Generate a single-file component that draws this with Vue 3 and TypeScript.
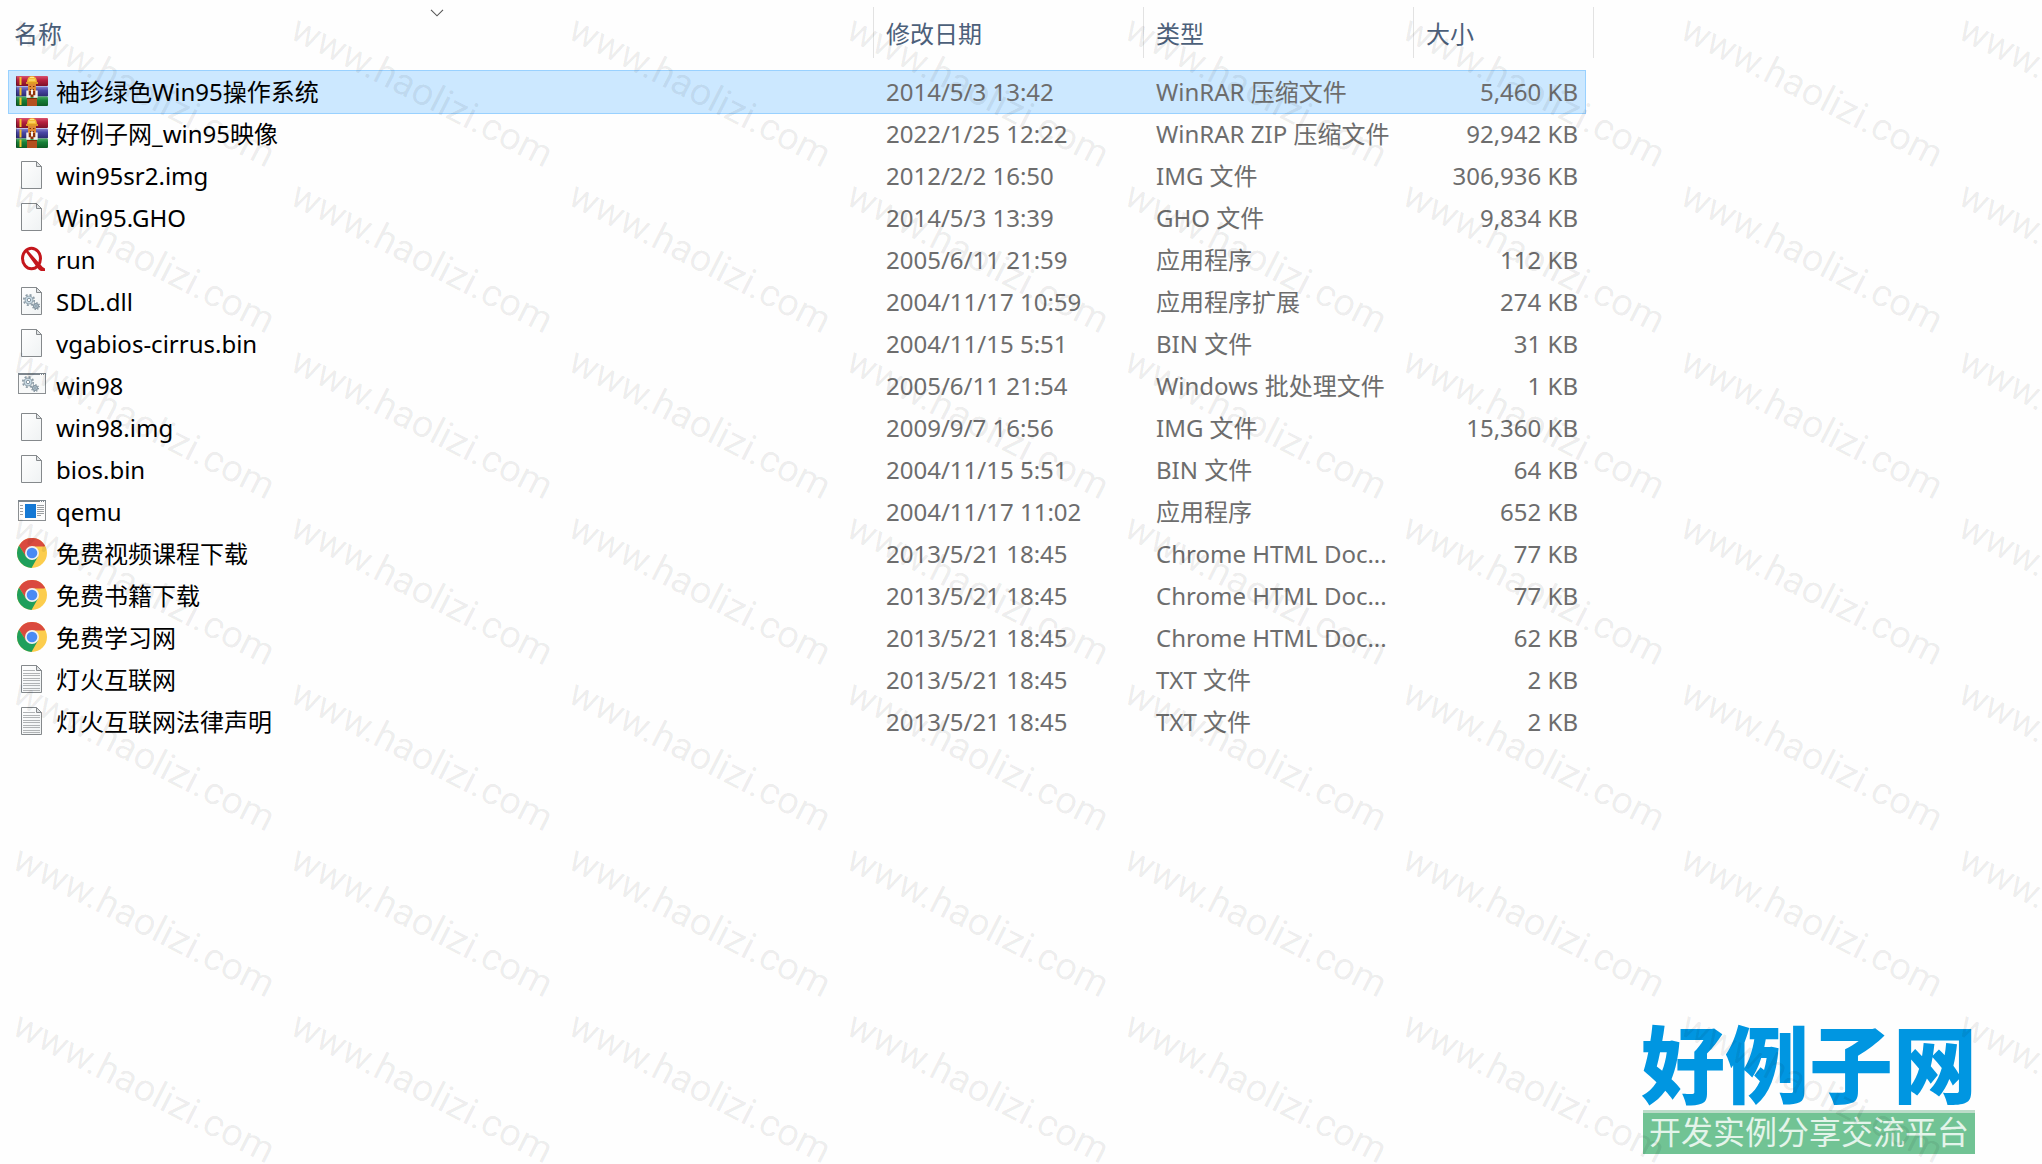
<script setup lang="ts">
import { ref } from 'vue'

type IconKind = 'rar' | 'file' | 'run' | 'dll' | 'bat' | 'exe' | 'chrome' | 'txt'

interface FileEntry {
  icon: IconKind
  name: string
  modified: string
  type: string
  size: string
}

const files: FileEntry[] = [
  { icon: 'rar', name: '袖珍绿色Win95操作系统', modified: '2014/5/3 13:42', type: 'WinRAR 压缩文件', size: '5,460 KB' },
  { icon: 'rar', name: '好例子网_win95映像', modified: '2022/1/25 12:22', type: 'WinRAR ZIP 压缩文件', size: '92,942 KB' },
  { icon: 'file', name: 'win95sr2.img', modified: '2012/2/2 16:50', type: 'IMG 文件', size: '306,936 KB' },
  { icon: 'file', name: 'Win95.GHO', modified: '2014/5/3 13:39', type: 'GHO 文件', size: '9,834 KB' },
  { icon: 'run', name: 'run', modified: '2005/6/11 21:59', type: '应用程序', size: '112 KB' },
  { icon: 'dll', name: 'SDL.dll', modified: '2004/11/17 10:59', type: '应用程序扩展', size: '274 KB' },
  { icon: 'file', name: 'vgabios-cirrus.bin', modified: '2004/11/15 5:51', type: 'BIN 文件', size: '31 KB' },
  { icon: 'bat', name: 'win98', modified: '2005/6/11 21:54', type: 'Windows 批处理文件', size: '1 KB' },
  { icon: 'file', name: 'win98.img', modified: '2009/9/7 16:56', type: 'IMG 文件', size: '15,360 KB' },
  { icon: 'file', name: 'bios.bin', modified: '2004/11/15 5:51', type: 'BIN 文件', size: '64 KB' },
  { icon: 'exe', name: 'qemu', modified: '2004/11/17 11:02', type: '应用程序', size: '652 KB' },
  { icon: 'chrome', name: '免费视频课程下载', modified: '2013/5/21 18:45', type: 'Chrome HTML Doc...', size: '77 KB' },
  { icon: 'chrome', name: '免费书籍下载', modified: '2013/5/21 18:45', type: 'Chrome HTML Doc...', size: '77 KB' },
  { icon: 'chrome', name: '免费学习网', modified: '2013/5/21 18:45', type: 'Chrome HTML Doc...', size: '62 KB' },
  { icon: 'txt', name: '灯火互联网', modified: '2013/5/21 18:45', type: 'TXT 文件', size: '2 KB' },
  { icon: 'txt', name: '灯火互联网法律声明', modified: '2013/5/21 18:45', type: 'TXT 文件', size: '2 KB' },
]

const selected = ref(0)

// Enough watermark tiles to cover the window
const tileColumns = Math.ceil(window.innerWidth / 278)
const tileCount = tileColumns * Math.ceil(window.innerHeight / 166)
</script>

<template>
  <div class="page">
    <svg class="defs" width="0" height="0" aria-hidden="true">
      <defs>
        <linearGradient id="rar-red" x1="0" y1="0" x2="0" y2="1">
          <stop offset="0" stop-color="#d8536f" /><stop offset=".4" stop-color="#b8203f" /><stop offset="1" stop-color="#7d1028" />
        </linearGradient>
        <linearGradient id="rar-blue" x1="0" y1="0" x2="0" y2="1">
          <stop offset="0" stop-color="#8583cf" /><stop offset=".4" stop-color="#4a47a5" /><stop offset="1" stop-color="#2b2a70" />
        </linearGradient>
        <linearGradient id="rar-green" x1="0" y1="0" x2="0" y2="1">
          <stop offset="0" stop-color="#4fae63" /><stop offset=".4" stop-color="#178038" /><stop offset="1" stop-color="#0e5c25" />
        </linearGradient>
        <linearGradient id="paper" x1="0" y1="0" x2="1" y2="1">
          <stop offset="0" stop-color="#ffffff" /><stop offset="1" stop-color="#eff2f3" />
        </linearGradient>
        <g id="gears" fill="none">
          <circle cx="8" cy="8" r="5.200" stroke="#8e9da7" stroke-width="1.800" stroke-dasharray="2.040 2.040" />
          <circle cx="8" cy="8" r="4" fill="#c9dae4" stroke="#98a8b2" />
          <circle cx="8" cy="8" r="1.700" fill="#fff" stroke="#8797a2" />
          <circle cx="15" cy="14" r="3.400" stroke="#83939e" stroke-width="1.200" stroke-dasharray="1.330 1.330" />
          <circle cx="15" cy="14" r="2.400" fill="#b9ccd7" stroke="#83939e" stroke-width="1.200" />
          <circle cx="15" cy="14" r=".8" fill="#6d7f8b" />
        </g>
        <g id="sheet">
          <path d="M5.500 1.500h15l5 5v22h-20z" fill="url(#paper)" stroke="#85898c" />
          <path d="M20.500 1.500v5h5z" fill="#dfe2e4" stroke="#85898c" />
        </g>
      </defs>
    </svg>

    <table class="details">
      <colgroup>
        <col />
        <col class="col-date" />
        <col class="col-type" />
        <col class="col-size" />
      </colgroup>
      <thead>
        <tr>
          <th scope="col" aria-sort="ascending">
            <button type="button" class="head head-name">名称</button>
            <span class="sort">
              <svg width="14" height="8" viewBox="0 0 14 8" aria-hidden="true">
                <path d="M1 .8l6 6 6-6" fill="none" stroke="#555" stroke-width="1.1" />
              </svg>
            </span>
          </th>
          <th scope="col"><button type="button" class="head">修改日期</button></th>
          <th scope="col"><button type="button" class="head">类型</button></th>
          <th scope="col"><button type="button" class="head">大小</button></th>
        </tr>
      </thead>
      <tbody>
        <tr
          v-for="(file, i) in files"
          :key="file.name"
          :class="{ selected: i === selected }"
          @click="selected = i"
        >
          <td>
            <div class="name">
              <svg class="icon" viewBox="0 0 32 32" aria-hidden="true">
                <template v-if="file.icon === 'rar'">
                  <rect x="0" y="0" width="32" height="10" rx="1" fill="url(#rar-red)" />
                  <rect x="0" y="10.500" width="32" height="10" rx="1" fill="url(#rar-blue)" />
                  <rect x="0" y="20.500" width="32" height="9.500" rx="1" fill="url(#rar-green)" />
                  <path d="M.5 0v30" stroke="#000" stroke-opacity=".25" />
                  <path d="M4.500 1v8M4.500 11.500v8M4.500 21.500v7.500" stroke="#f3c22b" stroke-width="2" />
                  <path d="M11 7q0-7 5-7t5 7z" fill="#f4bd35" />
                  <path d="M14 1.500h4M13 4h6" stroke="#ffe68a" />
                  <rect x="10" y="6" width="12" height="2" fill="#e09a26" />
                  <rect x="12" y="8" width="8" height="8" fill="#e08a35" />
                  <path d="M13.500 10.500h1.500m2 0h1.500M14 13.500h4" stroke="#7b3208" />
                  <rect x="12" y="15" width="8" height="6" fill="#8f3209" />
                  <path d="M11.500 14.500v6h3M20.500 14.500v6h-3" fill="none" stroke="#f5f2ef" stroke-width="2.400" />
                  <path d="M16 13.500v5" stroke="#f5f2ef" stroke-width="2" />
                  <path d="M11 22h10v8H11z" fill="#b4501f" />
                  <path d="M11 22.500h10" stroke="#7b2c08" />
                </template>
                <use v-else-if="file.icon === 'file'" href="#sheet" />
                <template v-else-if="file.icon === 'run'">
                  <ellipse cx="15.500" cy="14.500" rx="9" ry="10.300" fill="none" stroke="#c4161c" stroke-width="3" />
                  <path d="M9.500 7.500L11.500 6l13 14.500q2 3 4.500 4v2.500h-4q-2-.5-4-3.500z" fill="#c4161c" />
                </template>
                <template v-else-if="file.icon === 'dll'">
                  <use href="#sheet" />
                  <use href="#gears" x="5" y="6" />
                </template>
                <template v-else-if="file.icon === 'bat'">
                  <rect x="2.500" y="3.500" width="27" height="20" fill="#f8f9f9" stroke="#8b8f92" />
                  <path d="M2 4h28" stroke="#7d868d" stroke-width="2" />
                  <path d="M24 4.500h1m1 0h1m1 0h1" stroke="#fff" />
                  <use href="#gears" x="4" y="4" />
                </template>
                <template v-else-if="file.icon === 'exe'">
                  <rect x="2.500" y="4.500" width="27" height="20" fill="#fcfcfc" stroke="#8b8f92" />
                  <path d="M2 5h28" stroke="#7d868d" stroke-width="2" />
                  <path d="M24 5.500h1m1 0h1m1 0h1" stroke="#fff" />
                  <rect x="9" y="8" width="11" height="14" fill="#1478d4" />
                  <path d="M4 9.500h3M4 12.500h3M4 15.500h3M4 18.500h3M21 9.500h7M21 11.500h7M21 13.500h7M21 15.500h7M21 17.500h7M21 19.500h4" stroke="#9a9ea1" />
                </template>
                <template v-else-if="file.icon === 'chrome'">
                  <circle cx="16" cy="15" r="15" fill="#fccd4d" />
                  <path d="M3 7.500A15 15 0 0 1 29 7.500L28.500 8.500H16L9.800 18.500z" fill="#da4a3f" />
                  <path d="M3 7.500A15 15 0 0 0 15.500 30L22 18.500 16 15 10 18.500z" fill="#1f9f5b" />
                  <circle cx="16" cy="15" r="7" fill="#f1f1f1" />
                  <circle cx="16" cy="15" r="5.300" fill="#4a8af4" />
                </template>
                <template v-else>
                  <use href="#sheet" />
                  <path d="M7 6.500h12M7 9.500h17M7 11.500h17M7 14.500h17M7 16.500h17M7 19.500h17M7 21.500h17M7 24.500h17M7 26.500h17" stroke="#b0b3b5" />
                </template>
              </svg>
              <span>{{ file.name }}</span>
            </div>
          </td>
          <td>{{ file.modified }}</td>
          <td>{{ file.type }}</td>
          <td class="size">{{ file.size }}</td>
        </tr>
      </tbody>
    </table>

    <div class="brand">
      <div class="brand-name">好例子网</div>
      <div class="brand-tag">开发实例分享交流平台</div>
    </div>

    <div class="watermark" aria-hidden="true" :style="{ '--columns': tileColumns }">
      <div v-for="n in tileCount" :key="n" class="tile"><span>www.haolizi.com</span></div>
    </div>
  </div>
</template>

<style>
body {
  background: #fefefe;
}
</style>

<style scoped>
.page {
  position: relative;
  box-sizing: border-box;
  min-height: 100vh;
  padding: 0 0 10px 9px;
  display: flex;
  flex-direction: column;
  overflow: hidden;
  font-family: "Noto Sans", "Noto Sans CJK SC", sans-serif;
  font-size: 24px;
  color: #6d6d6d;
}

.defs {
  position: absolute;
}

.details {
  width: calc(100% - 457px);
  table-layout: fixed;
  border-collapse: collapse;
  white-space: nowrap;
}

.col-date,
.col-type {
  width: 270px;
}

.col-size {
  width: 172px;
}

th {
  position: relative;
  height: 71px;
  padding: 0;
  vertical-align: top;
}

th + th::before,
th:last-child::after {
  content: "";
  position: absolute;
  top: 7px;
  left: 0;
  width: 1px;
  height: 51px;
  background: #e2e2e2;
}

th:last-child::after {
  left: auto;
  right: -9px;
}

.head {
  display: block;
  width: 100%;
  height: 64px;
  padding: 0 0 0 13px;
  border: 0;
  background: none;
  font: inherit;
  font-weight: 400;
  text-align: left;
  color: #4c607a;
}

.head-name {
  padding-left: 5px;
}

.sort {
  position: absolute;
  top: 9px;
  left: -8px;
  right: 0;
  display: flex;
  justify-content: center;
}

td {
  height: 42px;
  padding: 0 0 0 13px;
  line-height: 42px;
}

td:first-child {
  padding-left: 7px;
  color: #000;
}

.size {
  padding-right: 7px;
  text-align: right;
}

.selected {
  background: #cce8ff;
  outline: 1px solid #99d1ff;
}

.name {
  display: flex;
  align-items: center;
  gap: 8px;
  height: 42px;
}

.icon {
  flex: none;
  width: 32px;
  height: 32px;
}

.brand {
  align-self: flex-end;
  width: 332px;
  margin-top: auto;
  margin-right: 67px;
}

.brand-name {
  display: flex;
  justify-content: center;
  padding-bottom: 5px;
  font-family: "Noto Sans CJK SC", sans-serif;
  font-size: 84px;
  font-weight: 900;
  line-height: 88px;
  white-space: nowrap;
  color: #0096e1;
}

.brand-tag {
  height: 41px;
  border-top: 3px solid #bcdcc9;
  background: #71c394;
  font-family: "Noto Sans CJK SC", sans-serif;
  font-size: 32px;
  line-height: 34px;
  text-align: center;
  white-space: nowrap;
  color: #e4f4ea;
}

.watermark {
  position: absolute;
  inset: 0;
  display: grid;
  grid-template-columns: repeat(var(--columns), 278px);
  grid-auto-rows: 166px;
  overflow: hidden;
  pointer-events: none;
  font-family: Roboto, "Liberation Sans", sans-serif;
  font-size: 38px;
  line-height: 40px;
  color: rgba(0, 0, 0, 0.07);
}

.tile {
  padding: 8px 0 0 25px;
}

.tile span {
  display: block;
  width: max-content;
  transform: rotate(27deg);
  transform-origin: 0 0;
}
</style>
